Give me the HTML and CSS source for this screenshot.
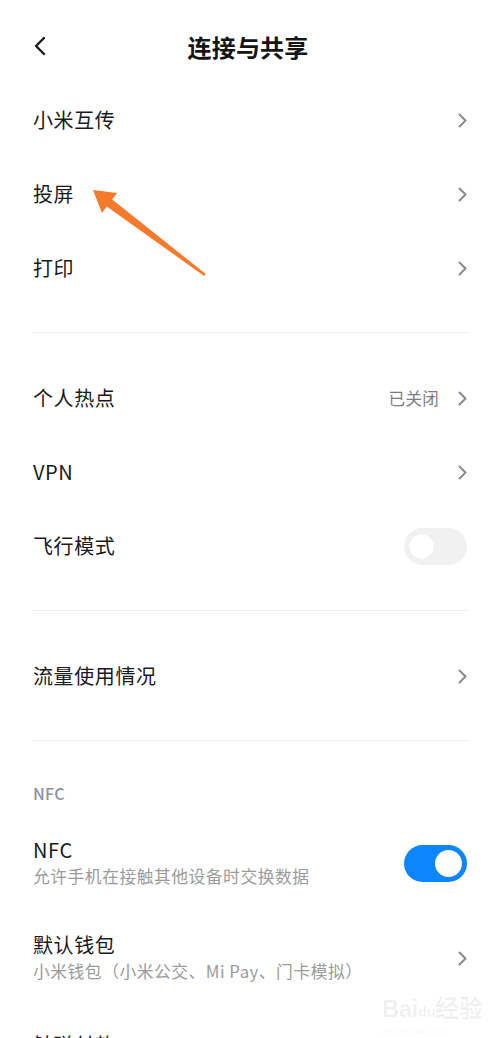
FILE: index.html
```html
<!DOCTYPE html>
<html lang="zh-CN">
<head>
    <meta charset="UTF-8">
    <meta name="viewport" content="width=device-width, initial-scale=1.0">
    <title>连接与共享</title>
    <link rel="stylesheet" href="styles.css">
</head>
<body>
    <div class="page">
        <header class="topbar">
            <span class="back">
                <svg width="12" height="20" viewBox="0 0 12 20"><path d="M10 2 L2 10 L10 18" fill="none" stroke="#1a1a1a" stroke-width="2.4" stroke-linecap="round" stroke-linejoin="round"/></svg>
            </span>
            <h1>连接与共享</h1>
            <span></span>
        </header>

        <section class="group">
            <div class="row">
                <span class="label">小米互传</span>
                <svg class="chevron" width="9" height="15" viewBox="0 0 9 15"><path d="M1.5 1.5 L7.5 7.5 L1.5 13.5" fill="none" stroke="#8a8a8a" stroke-width="2" stroke-linecap="round" stroke-linejoin="round"/></svg>
            </div>
            <div class="row">
                <span class="label">投屏</span>
                <svg class="chevron" width="9" height="15" viewBox="0 0 9 15"><path d="M1.5 1.5 L7.5 7.5 L1.5 13.5" fill="none" stroke="#8a8a8a" stroke-width="2" stroke-linecap="round" stroke-linejoin="round"/></svg>
            </div>
            <div class="row">
                <span class="label">打印</span>
                <svg class="chevron" width="9" height="15" viewBox="0 0 9 15"><path d="M1.5 1.5 L7.5 7.5 L1.5 13.5" fill="none" stroke="#8a8a8a" stroke-width="2" stroke-linecap="round" stroke-linejoin="round"/></svg>
            </div>
        </section>

        <hr class="divider">

        <section class="group">
            <div class="row">
                <span class="label">个人热点</span>
                <span class="right">
                    <span class="value">已关闭</span>
                    <svg class="chevron" width="9" height="15" viewBox="0 0 9 15"><path d="M1.5 1.5 L7.5 7.5 L1.5 13.5" fill="none" stroke="#8a8a8a" stroke-width="2" stroke-linecap="round" stroke-linejoin="round"/></svg>
                </span>
            </div>
            <div class="row">
                <span class="label">VPN</span>
                <svg class="chevron" width="9" height="15" viewBox="0 0 9 15"><path d="M1.5 1.5 L7.5 7.5 L1.5 13.5" fill="none" stroke="#8a8a8a" stroke-width="2" stroke-linecap="round" stroke-linejoin="round"/></svg>
            </div>
            <div class="row">
                <span class="label">飞行模式</span>
                <span class="switch"><span class="knob"></span></span>
            </div>
        </section>

        <hr class="divider">

        <section class="group">
            <div class="row">
                <span class="label">流量使用情况</span>
                <svg class="chevron" width="9" height="15" viewBox="0 0 9 15"><path d="M1.5 1.5 L7.5 7.5 L1.5 13.5" fill="none" stroke="#8a8a8a" stroke-width="2" stroke-linecap="round" stroke-linejoin="round"/></svg>
            </div>
        </section>

        <hr class="divider">

        <section class="group">
            <div class="group-title">NFC</div>
            <div class="row row-double nfc-row">
                <span class="text">
                    <span class="label">NFC</span>
                    <span class="sub">允许手机在接触其他设备时交换数据</span>
                </span>
                <span class="switch on"><span class="knob"></span></span>
            </div>
            <div class="row row-double wallet-row">
                <span class="text">
                    <span class="label">默认钱包</span>
                    <span class="sub">小米钱包（小米公交、Mi Pay、门卡模拟）</span>
                </span>
                <svg class="chevron" width="9" height="15" viewBox="0 0 9 15"><path d="M1.5 1.5 L7.5 7.5 L1.5 13.5" fill="none" stroke="#8a8a8a" stroke-width="2" stroke-linecap="round" stroke-linejoin="round"/></svg>
            </div>
            <div class="row row-last">
                <span class="label">触碰付款</span>
                <svg class="chevron" width="9" height="15" viewBox="0 0 9 15"><path d="M1.5 1.5 L7.5 7.5 L1.5 13.5" fill="none" stroke="#8a8a8a" stroke-width="2" stroke-linecap="round" stroke-linejoin="round"/></svg>
            </div>
        </section>

        <!-- annotation arrow pointing at 投屏 -->
        <svg class="pointer" width="500" height="300" viewBox="0 0 500 300">
            <polygon points="93,190 117,193 112.2,199.4 205.8,274 204.2,276 106.8,206.6 102,213" fill="#f57a2b"/>
        </svg>

        <div class="watermark">
            <span class="wm-logo">Bai<span class="wm-paw">du</span>经验</span>
            <span class="wm-url">jingyan.baidu.com</span>
        </div>
    </div>
</body>
</html>
```

FILE: styles.css
```css
body, html {
    margin: 0;
    padding: 0;
    background-color: #fff;
    color: #1a1a1a;
    font-family: "Noto Sans CJK SC", "Noto Sans", sans-serif;
}

.page {
    position: relative;
    width: 500px;
    height: 1038px;
    overflow: hidden;
}

.topbar {
    display: grid;
    grid-template-columns: 1fr auto 1fr;
    align-items: center;
    height: 74px;
    margin-top: 9px;
    padding: 0 38px 0 34px;
}

.back {
    display: flex;
    align-items: center;
}

.topbar h1 {
    margin: 0;
    font-size: 24px;
    font-weight: 700;
    letter-spacing: 0.2px;
    color: #151515;
}

.row {
    display: flex;
    align-items: center;
    justify-content: space-between;
    height: 74px;
    padding: 0 33px 0 33px;
}

.label {
    font-size: 20px;
    letter-spacing: 0.6px;
    line-height: 26px;
}

.right {
    display: flex;
    align-items: center;
    gap: 19px;
}

.value {
    font-size: 16.5px;
    color: #7d7d7d;
    letter-spacing: 0.3px;
}

.chevron {
    flex-shrink: 0;
}

.divider {
    border: none;
    height: 1px;
    background-color: #efefef;
    margin: 27px 32px 28px;
}

.group-title {
    display: flex;
    align-items: center;
    height: 48px;
    padding-left: 33px;
    font-size: 16px;
    font-weight: 500;
    letter-spacing: 0.3px;
    color: #8c919b;
}

.row-double .text {
    display: flex;
    flex-direction: column;
}

.sub {
    font-size: 16.8px;
    line-height: 26px;
    color: #9b9b9b;
    letter-spacing: 0.5px;
}

.nfc-row {
    height: 92px;
}

.wallet-row {
    height: 98px;
}

.row-last {
    margin-top: 1px;
}

.switch {
    display: flex;
    align-items: center;
    box-sizing: border-box;
    width: 63px;
    height: 37px;
    padding: 0 5px;
    border-radius: 19px;
    background-color: #f1f1f1;
}

.switch .knob {
    width: 25px;
    height: 25px;
    border-radius: 50%;
    background-color: #fff;
    box-shadow: 0 0 1px rgba(0, 0, 0, 0.12);
}

.switch.on {
    justify-content: flex-end;
    background-color: #0d85fd;
}

.switch.on .knob {
    width: 27px;
    height: 27px;
    box-shadow: none;
}

.pointer {
    position: absolute;
    left: 0;
    top: 0;
}

.watermark {
    position: absolute;
    left: 382px;
    top: 994px;
    display: flex;
    flex-direction: column;
    color: rgba(0, 0, 0, 0.06);
    font-family: "Liberation Sans", sans-serif;
}

.wm-logo {
    font-size: 24px;
    font-weight: 700;
    line-height: 30px;
    letter-spacing: -0.5px;
}

.wm-paw {
    font-size: 15px;
}

.wm-url {
    font-size: 8px;
    line-height: 10px;
}
```
